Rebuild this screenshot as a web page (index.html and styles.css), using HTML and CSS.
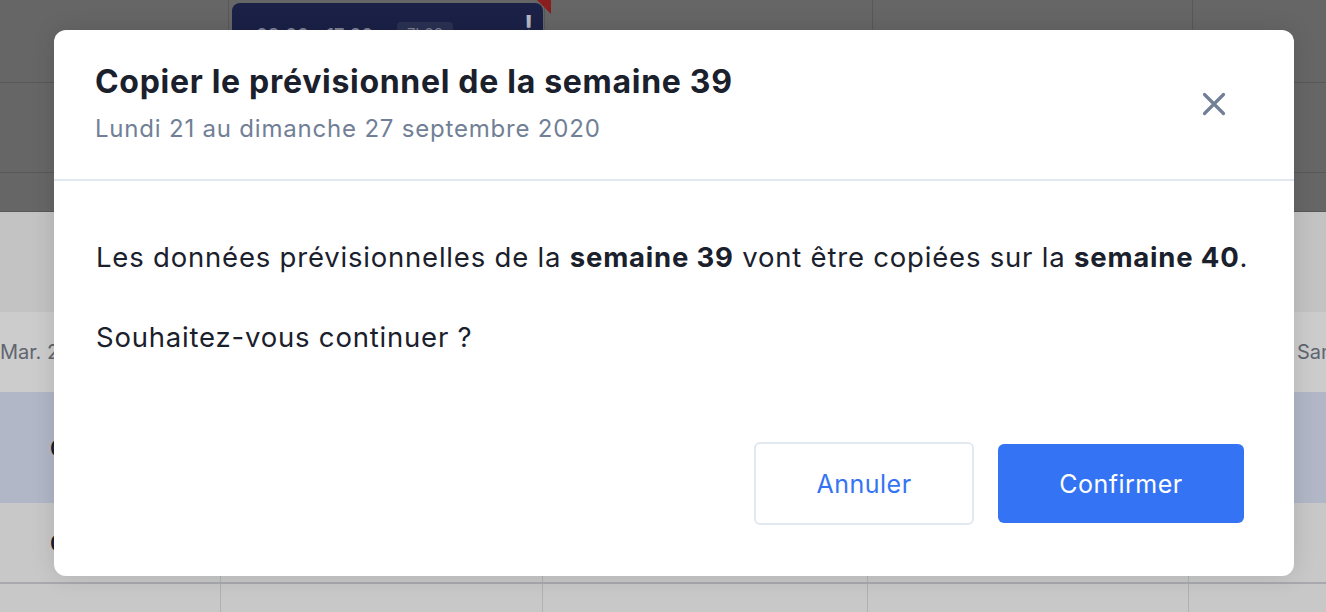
FILE: index.html
```html
<!DOCTYPE html>
<html lang="fr">
<head>
<meta charset="utf-8">
<title>Copier le prévisionnel</title>
<link rel="stylesheet" href="styles.css">
</head>
<body>
<div class="page">
  <div class="top">
    <div class="tcell"></div>
    <div class="tcell card-cell">
      <div class="event">
        <span class="event-time">08:00 - 17:00</span>
        <span class="event-badge">7h00</span>
        <span class="event-alert">!</span>
      </div>
      <span class="event-corner"></span>
    </div>
    <div class="tcell"></div>
    <div class="tcell"></div>
    <div class="tcell last"></div>
    <div class="tcell"></div>
    <div class="tcell"></div>
    <div class="tcell"></div>
    <div class="tcell"></div>
    <div class="tcell last"></div>
    <div class="tcell"></div>
    <div class="tcell"></div>
    <div class="tcell"></div>
    <div class="tcell"></div>
    <div class="tcell last"></div>
  </div>
  <div class="bottom">
    <div class="band"></div>
    <div class="hrow">
      <div class="hcell">Mar. 22</div>
      <div class="hcell"></div>
      <div class="hcell"></div>
      <div class="hcell"></div>
      <div class="hcell right">Sam. 26</div>
    </div>
    <div class="brow blue">
      <div class="bcell"><span class="btext">08:00</span></div>
      <div class="bcell"></div>
      <div class="bcell"></div>
      <div class="bcell"></div>
      <div class="bcell last"></div>
    </div>
    <div class="brow grey">
      <div class="bcell"><span class="btext">08:00</span></div>
      <div class="bcell"></div>
      <div class="bcell"></div>
      <div class="bcell"></div>
      <div class="bcell last"></div>
    </div>
    <div class="brow rest">
      <div class="bcell"></div>
      <div class="bcell"></div>
      <div class="bcell"></div>
      <div class="bcell"></div>
      <div class="bcell last"></div>
    </div>
  </div>

  <div class="modal">
    <div class="modal-head">
      <div class="head-text">
        <h1 class="modal-title">Copier le prévisionnel de la semaine 39</h1>
        <p class="modal-sub">Lundi 21 au dimanche 27 septembre 2020</p>
      </div>
      <button class="close" aria-label="Fermer">
        <svg width="24" height="24" viewBox="0 0 24 24"><path d="M2.5 2.5 L21.5 21.5 M21.5 2.5 L2.5 21.5" stroke="#718096" stroke-width="3.2" stroke-linecap="round" fill="none"/></svg>
      </button>
    </div>
    <div class="modal-body">
      <p class="msg">Les données prévisionnelles de la <strong>semaine 39</strong> vont être copiées sur la <strong>semaine 40</strong>.</p>
      <p class="msg q">Souhaitez-vous continuer ?</p>
      <div class="actions">
        <button class="btn ghost">Annuler</button>
        <button class="btn primary">Confirmer</button>
      </div>
    </div>
  </div>
</div>
</body>
</html>
```

FILE: styles.css
```css
* { box-sizing: border-box; }
html, body { margin: 0; padding: 0; }
body {
  width: 1326px;
  height: 612px;
  overflow: hidden;
  font-family: Inter, "Noto Sans", sans-serif;
  background: #c8c8c8;
}
.page {
  position: relative;
  width: 1326px;
  height: 612px;
  overflow: hidden;
}

/* background calendar (dimmed) */
.top {
  height: 212px;
  background: #666666;
  display: grid;
  grid-template-columns: 229px 316px 328px 320px 1fr;
  grid-template-rows: 83px 90px 39px;
}
.tcell {
  border-right: 1px solid #585858;
  border-bottom: 1px solid #585858;
  position: relative;
}
.tcell.last { border-right: none; }
.card-cell { z-index: 1; }
.event {
  position: absolute;
  left: 3px;
  top: 3px;
  width: 311px;
  height: 110px;
  background: #1b2147;
  border-radius: 8px;
  overflow: hidden;
}
.event-time {
  position: absolute;
  left: 24px;
  top: 22px;
  color: #7f8397;
  font-size: 18px;
  font-weight: 600;
  white-space: nowrap;
}
.event-badge {
  position: absolute;
  left: 165px;
  top: 19px;
  padding: 2px 10px;
  background: #2b3152;
  color: #7f8397;
  border-radius: 4px;
  font-size: 15px;
}
.event-alert {
  position: absolute;
  right: 10px;
  top: 6px;
  color: #b6b8c2;
  font-size: 26px;
  font-weight: 700;
}
.event-corner {
  position: absolute;
  right: -7px;
  top: -2px;
  width: 0;
  height: 0;
  border-top: 16px solid #8a1d1d;
  border-left: 16px solid transparent;
}

.bottom { display: flex; flex-direction: column; }
.band { height: 100px; background: #c3c3c3; }
.hrow {
  height: 80px;
  background: #cccccc;
  display: grid;
  grid-template-columns: 221px 322px 325px 321px 1fr;
  align-items: center;
}
.hcell {
  color: #5f6570;
  font-size: 20px;
  white-space: nowrap;
  overflow: hidden;
}
.hcell.right { padding-left: 108px; }
.brow {
  display: grid;
  grid-template-columns: 221px 322px 325px 321px 1fr;
}
.brow.blue { height: 111px; background: #b1b7c7; }
.brow.grey { height: 81px; background: #c8c8c8; border-bottom: 2px solid #a8a9ae; }
.brow.rest { height: 28px; background: #c8c8c8; }
.bcell {
  border-right: 1px solid #b0b0b8;
  display: flex;
  align-items: center;
}
.blue .bcell { border-right-color: #a9aebd; }
.bcell.last { border-right: none; }
.btext {
  margin-left: 50px;
  color: #1a202c;
  font-size: 22px;
  font-weight: 600;
}

/* modal */
.modal {
  position: absolute;
  left: 54px;
  top: 30px;
  width: 1240px;
  height: 546px;
  background: #ffffff;
  border-radius: 12px;
  box-shadow: 0 0 24px rgba(0, 0, 0, 0.12);
  display: flex;
  flex-direction: column;
  z-index: 5;
}
.modal-head {
  height: 151px;
  border-bottom: 2px solid #e2e8f0;
  padding: 32px 68px 0 41px;
  display: flex;
  justify-content: space-between;
  align-items: flex-start;
}
.modal-title {
  margin: 0;
  font-size: 32px;
  line-height: 40px;
  font-weight: 700;
  color: #1a202c;
  letter-spacing: 0.7px;
}
.modal-sub {
  margin: 12px 0 0 0;
  font-size: 24px;
  line-height: 30px;
  color: #718096;
  letter-spacing: 0.8px;
}
.close {
  margin-top: 30px;
  width: 24px;
  height: 24px;
  padding: 0;
  border: none;
  background: transparent;
  display: flex;
}
.modal-body {
  flex: 1;
  padding: 57px 50px 51px 42px;
  display: flex;
  flex-direction: column;
}
.msg {
  margin: 0;
  font-size: 27.5px;
  line-height: 38px;
  color: #1a202c;
  letter-spacing: 0.8px;
  white-space: nowrap;
}
.msg strong { font-weight: 700; }
.msg.q { margin-top: 42px; }
.actions {
  margin-top: auto;
  display: flex;
  justify-content: flex-end;
  align-items: center;
  gap: 24px;
}
.btn {
  font-family: inherit;
  font-size: 25px;
  letter-spacing: 0.5px;
  border-radius: 6px;
  cursor: pointer;
}
.btn.ghost {
  width: 220px;
  height: 83px;
  background: #ffffff;
  color: #3474f4;
  border: 2px solid #e2e8f0;
}
.btn.primary {
  width: 246px;
  height: 79px;
  background: #3474f4;
  color: #ffffff;
  border: none;
}
```
